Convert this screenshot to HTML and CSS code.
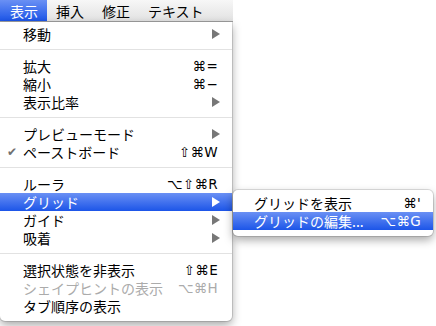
FILE: index.html
```html
<!DOCTYPE html>
<html lang="ja">
<head>
<meta charset="utf-8">
<link rel="stylesheet" href="styles.css">
</head>
<body>
<div class="screen">
  <div class="menubar">
    <span class="mb-item active">表示</span>
    <span class="mb-item">挿入</span>
    <span class="mb-item">修正</span>
    <span class="mb-item">テキスト</span>
  </div>
  <div class="menu main">
    <div class="item"><span class="label">移動</span><span class="arrow"></span></div>
    <div class="sep"></div>
    <div class="item"><span class="label">拡大</span><span class="key">⌘=</span></div>
    <div class="item"><span class="label">縮小</span><span class="key">⌘−</span></div>
    <div class="item"><span class="label">表示比率</span><span class="arrow"></span></div>
    <div class="sep"></div>
    <div class="item"><span class="label">プレビューモード</span><span class="arrow"></span></div>
    <div class="item"><span class="check">✔</span><span class="label">ペーストボード</span><span class="key">⇧⌘W</span></div>
    <div class="sep"></div>
    <div class="item"><span class="label">ルーラ</span><span class="key">⌥⇧⌘R</span></div>
    <div class="item hl"><span class="label">グリッド</span><span class="arrow"></span></div>
    <div class="item"><span class="label">ガイド</span><span class="arrow"></span></div>
    <div class="item"><span class="label">吸着</span><span class="arrow"></span></div>
    <div class="sep"></div>
    <div class="item"><span class="label">選択状態を非表示</span><span class="key">⇧⌘E</span></div>
    <div class="item disabled"><span class="label">シェイプヒントの表示</span><span class="key">⌥⌘H</span></div>
    <div class="item"><span class="label">タブ順序の表示</span></div>
  </div>
  <div class="menu sub">
    <div class="item"><span class="label">グリッドを表示</span><span class="key">⌘'</span></div>
    <div class="item hl"><span class="label">グリッドの編集...</span><span class="key">⌥⌘G</span></div>
  </div>
</div>
</body>
</html>
```

FILE: styles.css
```css
html, body {
  margin: 0;
  padding: 0;
  background: #ffffff;
}
.screen {
  position: relative;
  width: 436px;
  height: 326px;
  overflow: hidden;
  font-family: "Noto Sans CJK JP", "Noto Sans", sans-serif;
  font-size: 14px;
  color: #000;
}
.menubar {
  width: 233px;
  height: 22px;
  display: flex;
  align-items: stretch;
  background: linear-gradient(#f7f7f7, #e2e2e2);
  border-bottom: 1px solid #b4b4b4;
  box-sizing: border-box;
}
.mb-item {
  display: flex;
  align-items: center;
  padding: 0 9px;
  line-height: 20px;
}
.mb-item.active {
  color: #fff;
  background: linear-gradient(#6a90f4, #1c55e8);
  padding: 0 9px 0 10px;
}
.menu {
  position: absolute;
  background: #fff;
  box-shadow: 0 0 0 1px rgba(0,0,0,0.12), 0 4px 10px rgba(0,0,0,0.35);
  border-radius: 0 0 5px 5px;
}
.menu.main {
  left: 0;
  top: 22px;
  width: 232px;
  padding: 3px 0 6px 0;
}
.menu.sub {
  left: 233px;
  top: 190px;
  width: 200px;
  padding: 4px 0 6px 0;
  border-radius: 5px;
}
.item {
  position: relative;
  display: flex;
  align-items: center;
  height: 18px;
  line-height: 18px;
  padding: 0 14px 0 23px;
  white-space: nowrap;
}
.sub .item { padding: 0 12px 0 21px; }
.label { flex: 1; }
.key {
  font-family: "DejaVu Sans", sans-serif;
  font-size: 13.5px;
  letter-spacing: 0.3px;
}
.arrow {
  width: 0;
  height: 0;
  border-left: 8px solid #777;
  border-top: 5px solid transparent;
  border-bottom: 5px solid transparent;
  margin-right: -2px;
}
.check {
  position: absolute;
  left: 7px;
  color: #707070;
  font-family: "DejaVu Sans", sans-serif;
  font-size: 12px;
}
.sep {
  height: 1px;
  background: #e2e2e2;
  margin: 6px 0 7px 0;
}
.item.hl {
  background: linear-gradient(#6a90f4, #1c55e8);
  color: #fff;
}
.item.hl .arrow { border-left-color: #fff; }
.item.disabled { color: #ababab; }
```
